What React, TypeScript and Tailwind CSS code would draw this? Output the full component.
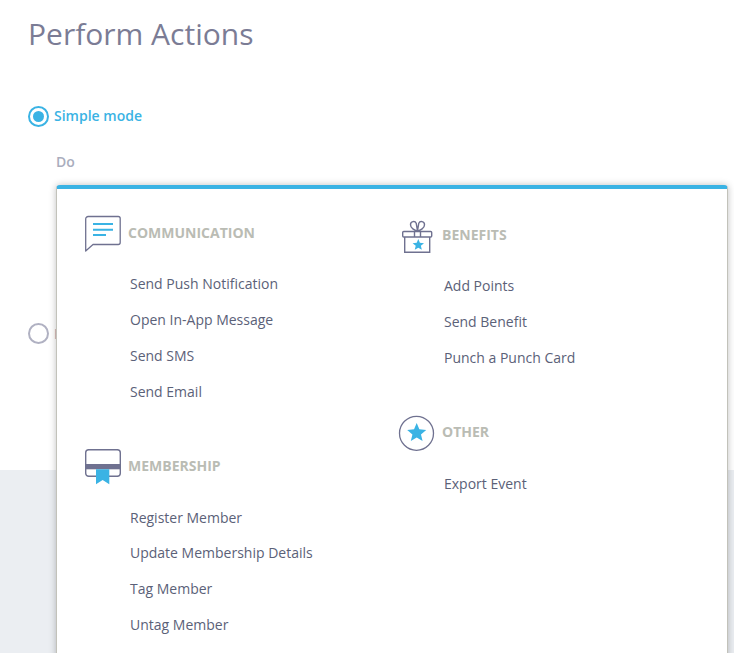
import React from 'react';

const StarShape = ({ cx, cy, r }: { cx: number; cy: number; r: number }) => {
  const pts: string[] = [];
  for (let i = 0; i < 10; i++) {
    const rad = i % 2 === 0 ? r : r * 0.45;
    const a = (Math.PI / 5) * i - Math.PI / 2;
    pts.push(`${(cx + rad * Math.cos(a)).toFixed(2)},${(cy + rad * Math.sin(a)).toFixed(2)}`);
  }
  return <polygon points={pts.join(' ')} fill="#3ab3e4" />;
};

const ChatIcon = () => (
  <svg width="36" height="36" viewBox="0 0 36 36" fill="none" className="overflow-visible">
    <path d="M.7 37V5a2.500 2.500 0 0 1 2.500-2.500h30a2 2 0 0 1 2 2v24a2 2 0 0 1-2 2H8z" stroke="#6f7190" strokeWidth="1.300" strokeLinejoin="round" />
    <path d="M8 10h20M8 15.700h20M8 21h13" stroke="#3ab3e4" strokeWidth="2" />
  </svg>
);

const GiftIcon = () => (
  <svg width="36" height="36" viewBox="0 0 36 36" fill="none" stroke="#6f7190" strokeWidth="1.400" className="overflow-visible">
    <rect x="3.700" y="15.500" width="29" height="5.500" rx="1" />
    <path d="M5.700 21v15.300h25V21" />
    <path d="M15.500 15.500V21M21.500 15.500V21" />
    <path d="M18.500 15c-3-.5-7-3-7-6.300 0-3.500 4.500-4.200 5.700-1.500L18.500 15zM18.500 15c3-.5 7-3 7-6.300 0-3.500-4.500-4.200-5.700-1.500L18.500 15z" />
    <g stroke="none"><StarShape cx={19.300} cy={29} r={6} /></g>
  </svg>
);

const CardIcon = () => (
  <svg width="36" height="36" viewBox="0 0 36 36" fill="none" className="overflow-visible">
    <rect x=".7" y="2.800" width="34.600" height="26.500" rx="3" stroke="#6f7190" strokeWidth="1.400" fill="#fff" />
    <rect x=".7" y="17" width="34.600" height="5.300" fill="#6f7190" />
    <path d="M11 22.300h13.300v15l-6.650-4.300-6.650 4.300z" fill="#3ab3e4" />
  </svg>
);

const OtherIcon = () => (
  <svg width="36" height="36" viewBox="0 0 36 36" fill="none" className="overflow-visible">
    <circle cx="17.500" cy="20.300" r="17" stroke="#6f7190" strokeWidth="1.300" />
    <StarShape cx={17.700} cy={20} r={10} />
  </svg>
);

const Section = ({ icon, title, items, gap = '', listGap = 'mt-[15px]' }: { icon: React.ReactNode; title: string; items: string[]; gap?: string; listGap?: string }) => (
  <div className={gap}>
    <div className="flex h-9 items-center">
      <div className="flex w-[43px] shrink-0 items-center">{icon}</div>
      <span className="text-[14px] font-bold text-[#babcb4]">{title}</span>
    </div>
    <ul className={`pl-[45px] ${listGap}`}>
      {items.map(item => (
        <li key={item} className="flex h-9 items-center text-[14px] text-[#5b6178]">{item}</li>
      ))}
    </ul>
  </div>
);

export default function App() {
  return (
    <div className="relative flex h-[653px] w-[734px] flex-col overflow-hidden bg-white font-['Open_Sans',sans-serif]">
      <div className="h-[470px] pl-7">
        <h1 className="pt-[12px] text-[30px] leading-[44px] font-normal text-[#7b7c95]">Perform Actions</h1>
        <div className="mt-[49px] flex items-center gap-[5px]">
          <span className="flex h-[21px] w-[21px] translate-y-px items-center justify-center rounded-full border-2 border-[#3ab3e4]">
            <span className="h-[11px] w-[11px] rounded-full bg-[#3ab3e4]" />
          </span>
          <span className="text-[14px] font-semibold text-[#3ab3e4]">Simple mode</span>
        </div>
        <div className="mt-[27px] ml-7 text-[14px] leading-[18px] font-semibold text-[#a9adbd]">Do</div>
        <div className="mt-[152px] flex items-center gap-[5px]">
          <span className="h-[21px] w-[21px] rounded-full border-2 border-[#b0b1c2]" />
          <span className="text-[14px] font-semibold text-[#a9adbd]">If</span>
        </div>
      </div>
      <div className="flex-1 bg-[#ebeef2]" />

      <div className="absolute top-[185px] left-[56px] flex h-[520px] w-[672px] rounded-[4px] border-x border-x-[#c2c2ba] border-t-4 border-t-[#3ab3e4] bg-white pl-7 shadow-[0_0_7px_rgba(0,0,0,0.25)]">
        <div className="w-[314px] pt-[25px]">
          <Section
            icon={<ChatIcon />}
            title="COMMUNICATION"
            items={['Send Push Notification', 'Open In-App Message', 'Send SMS', 'Send Email']}
          />
          <Section
            gap="mt-[38px]"
            listGap="mt-[16px] [&>li:first-child]:h-[35px] [&>li:first-child]:pt-px"
            icon={<CardIcon />}
            title="MEMBERSHIP"
            items={['Register Member', 'Update Membership Details', 'Tag Member', 'Untag Member']}
          />
        </div>
        <div className="flex-1 pt-[27px]">
          <Section
            icon={<GiftIcon />}
            title="BENEFITS"
            items={['Add Points', 'Send Benefit', 'Punch a Punch Card']}
          />
          <Section gap="mt-[38px]" listGap="mt-[16px]" icon={<OtherIcon />} title="OTHER" items={['Export Event']} />
        </div>
      </div>
    </div>
  );
}
